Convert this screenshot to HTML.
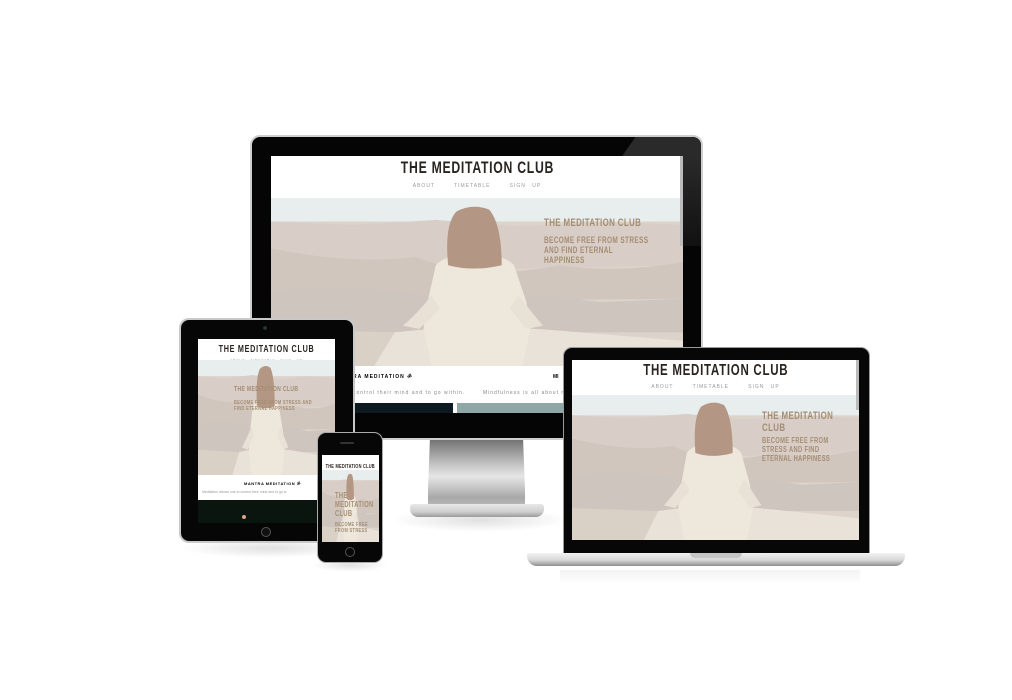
<!DOCTYPE html>
<html><head><meta charset="utf-8"><style>
*{margin:0;padding:0;box-sizing:border-box}
body{width:1012px;height:700px;background:#fff;position:relative;overflow:hidden;font-family:"Liberation Sans",sans-serif}
.a{position:absolute}
.scr{position:absolute;overflow:hidden;background:#fff}
.hd{position:absolute;left:0;right:0;top:0;background:#fff;text-align:center}
.tt{font-weight:bold;color:#2a2420;letter-spacing:1px;white-space:nowrap;display:inline-block;transform:scaleX(.72);transform-origin:center top}
.nv{color:#9a9a9a;letter-spacing:1px;white-space:nowrap}
.hero{position:absolute;left:0;right:0;overflow:hidden}
.hero svg{position:absolute;left:0;top:0;width:100%;height:100%}
.ht{position:absolute;font-weight:bold;color:#a48d72;text-transform:uppercase;letter-spacing:.5px;line-height:1.1;transform:scaleX(.72);transform-origin:left top}
.sh{position:absolute;border-radius:50%/40%;background:radial-gradient(ellipse at center,rgba(0,0,0,.12),rgba(0,0,0,0) 70%)}
</style></head><body>
<svg width="0" height="0" style="position:absolute"><defs>
<symbol id="h" viewBox="0 0 100 100" preserveAspectRatio="none">
<rect width="100" height="100" fill="#dcd3ca"/>
<rect width="100" height="14" fill="#e8edee"/>
<path d="M0 14 L20 16 L40 13 L60 17 L80 14 L100 16 L100 40 L0 45Z" fill="#d8cec7"/>
<path d="M0 30 Q20 40 35 35 Q50 50 70 40 Q85 45 100 38 L100 60 L0 62Z" fill="#d1c6bd"/>
<path d="M0 55 Q25 50 40 60 Q60 55 80 62 L100 60 L100 80 L0 80Z" fill="#cfc5bf"/>
<path d="M25 100 L30 80 Q50 74 75 80 L100 85 L100 100Z" fill="#e9e2d8"/>
<path d="M0 78 L30 80 L25 100 L0 100Z" fill="#d9d0c6"/>
<path d="M40 40 Q42 34 49 33 Q57 34 59 40 L62 62 L63 78 L61 100 L39 100 L37 78 L38 62Z" fill="#ede7dc"/>
<path d="M39 58 Q35 70 32 76 L36 78 L41 66Z" fill="#e8e1d6"/>
<path d="M60 58 Q64 70 66 76 L62 78 L58 66Z" fill="#e8e1d6"/>
<path d="M43 40 Q42 16 45 8 Q49 3 53 7 Q56 16 56 40 Q49 44 43 40Z" fill="#b39784"/>
</symbol></defs></svg>

<!-- MONITOR -->
<div class="sh" style="left:390px;top:508px;width:180px;height:24px"></div>
<div class="a" style="left:428px;top:438px;width:97px;height:70px;background:linear-gradient(180deg,#6d6d6d,#c9c9c9 40%,#e6e6e6 55%,#a8a8a8 85%,#bdbdbd);clip-path:polygon(2% 0,98% 0,100% 75%,106% 100%,-6% 100%,0 75%)"></div>
<div class="a" style="left:410px;top:504px;width:134px;height:13px;border-radius:3px 3px 8px 8px;background:linear-gradient(180deg,#e8e8e8,#cfcfcf 60%,#9a9a9a)"></div>
<div class="a" style="left:250px;top:135px;width:453px;height:305px;border-radius:10px;background:#050505;border:2px solid #cfcfcf"></div>
<div class="a" style="left:600px;top:137px;width:101px;height:19px;background:#2a2a2a;clip-path:polygon(35% 0,100% 0,100% 100%,22% 100%);border-top-right-radius:9px"></div>
<div class="a" style="left:683px;top:156px;width:18px;height:90px;background:linear-gradient(#2a2a2a,#111)"></div>
<div class="scr" style="left:271px;top:156px;width:412px;height:257px">
 <div class="hd" style="height:42px">
  <div class="tt" style="font-size:17px;margin-top:2px">THE MEDITATION CLUB</div>
  <div class="nv" style="font-size:5px;margin-top:5px;word-spacing:4px">ABOUT&nbsp;&nbsp; TIMETABLE&nbsp;&nbsp; SIGN UP</div>
 </div>
 <div class="hero" style="top:42px;height:168px"><svg><use href="#h"/></svg>
  <div class="ht" style="left:273px;top:19px;font-size:11px">The Meditation Club</div>
  <div class="ht" style="left:273px;top:38px;font-size:9px;width:150px">Become free from stress and find eternal happiness</div>
 </div>
 <div class="a" style="left:0;top:210px;width:412px;height:37px;background:#fff">
  <div class="a" style="left:82px;top:8px;font-size:5px;font-weight:bold;letter-spacing:1px">RA MEDITATION ॐ</div>
  <div class="a" style="left:82px;top:24px;font-size:5px;color:#888;letter-spacing:1px">control their mind and to go within.</div>
  <div class="a" style="left:282px;top:8px;font-size:5px;font-weight:bold">MI</div>
  <div class="a" style="left:212px;top:24px;font-size:5px;color:#888;letter-spacing:1px">Mindfulness is all about m</div>
 </div>
 <div class="a" style="left:82px;top:247px;width:100px;height:10px;background:#0d1a20"></div>
 <div class="a" style="left:186px;top:247px;width:226px;height:10px;background:#8fa7a6"></div>
 <div class="a" style="right:0;top:0;width:3px;height:90px;background:#bbb"></div>
</div>

<!-- LAPTOP -->
<div class="a" style="left:560px;top:570px;width:300px;height:14px;background:linear-gradient(#f3f3f3,#fff)"></div>
<div class="a" style="left:563px;top:347px;width:307px;height:208px;border-radius:9px 9px 0 0;background:#070707;border:1px solid #9a9a9a"></div>
<div class="scr" style="left:572px;top:360px;width:287px;height:180px">
 <div class="hd" style="height:35px">
  <div class="tt" style="font-size:16px;margin-top:2px">THE MEDITATION CLUB</div>
  <div class="nv" style="font-size:5px;margin-top:4px;word-spacing:4px">ABOUT&nbsp;&nbsp; TIMETABLE&nbsp;&nbsp; SIGN UP</div>
 </div>
 <div class="hero" style="top:35px;height:145px"><svg><use href="#h"/></svg>
  <div class="ht" style="left:190px;top:15px;font-size:11px;width:120px">The Meditation Club</div>
  <div class="ht" style="left:190px;top:42px;font-size:8px;width:105px">Become free from stress and find eternal happiness</div>
 </div>
 <div class="a" style="right:0;top:0;width:3px;height:50px;background:#bbb"></div>
</div>
<div class="a" style="left:527px;top:553px;width:378px;height:13px;border-radius:2px 2px 10px 10px;background:linear-gradient(180deg,#f2f2f2,#d7d7d7 55%,#8e8e8e)"></div>
<div class="a" style="left:690px;top:553px;width:52px;height:5px;border-radius:0 0 5px 5px;background:#c5c5c5"></div>

<!-- TABLET -->
<div class="sh" style="left:180px;top:538px;width:180px;height:20px"></div>
<div class="a" style="left:179px;top:318px;width:176px;height:225px;border-radius:10px;background:#060606;border:2px solid #c9c9c9"></div>
<div class="a" style="left:263px;top:326px;width:4px;height:4px;border-radius:50%;background:#233"></div>
<div class="scr" style="left:198px;top:339px;width:137px;height:184px">
 <div class="hd" style="height:21px">
  <div class="tt" style="font-size:10px;margin-top:1px">THE MEDITATION CLUB</div>
  <div class="nv" style="font-size:3px;margin-top:1px;word-spacing:3px">ABOUT TIMETABLE SIGN UP</div>
 </div>
 <div class="hero" style="top:21px;height:115px"><svg><use href="#h"/></svg>
  <div class="ht" style="left:36px;top:26px;font-size:7px">The Meditation Club</div>
  <div class="ht" style="left:36px;top:40px;font-size:5.5px;width:125px">Become free from stress and find eternal happiness</div>
 </div>
 <div class="a" style="left:0;top:136px;width:137px;height:25px;background:#fff">
  <div class="a" style="left:46px;top:6px;font-size:4px;font-weight:bold;letter-spacing:.5px">MANTRA MEDITATION ॐ</div>
  <div class="a" style="left:4px;top:15px;font-size:3.5px;color:#999;white-space:nowrap">Meditation allows one to control their mind and to go w</div>
 </div>
 <div class="a" style="left:0;top:161px;width:137px;height:23px;background:#0b1510"></div>
 <div class="a" style="left:44px;top:176px;width:4px;height:4px;border-radius:50%;background:#d9a58a"></div>
</div>
<div class="a" style="left:261px;top:527px;width:10px;height:10px;border-radius:50%;border:1px solid #555;background:#111"></div>

<!-- PHONE -->
<div class="sh" style="left:312px;top:558px;width:76px;height:14px"></div>
<div class="a" style="left:317px;top:432px;width:66px;height:131px;border-radius:9px;background:#070707;border:1px solid #aaa"></div>
<div class="a" style="left:340px;top:442px;width:14px;height:2px;border-radius:1px;background:#333"></div>
<div class="scr" style="left:322px;top:455px;width:57px;height:87px">
 <div class="hd" style="height:15px">
  <div class="tt" style="font-size:5.5px;margin-top:1px;letter-spacing:.3px;margin-left:-20px;margin-right:-20px">THE MEDITATION CLUB</div>
  <div class="nv" style="font-size:2.5px;margin-top:0px">ABOUT TIMETABLE SIGN UP</div>
 </div>
 <div class="hero" style="top:15px;height:72px"><svg><use href="#h"/></svg>
  <div class="ht" style="left:13px;top:22px;font-size:8px;width:60px">The Meditation Club</div>
  <div class="ht" style="left:13px;top:52px;font-size:5.5px;width:55px">Become free from stress</div>
 </div>
</div>
<div class="a" style="left:345px;top:547px;width:10px;height:10px;border-radius:50%;border:1px solid #555"></div>
</body></html>
